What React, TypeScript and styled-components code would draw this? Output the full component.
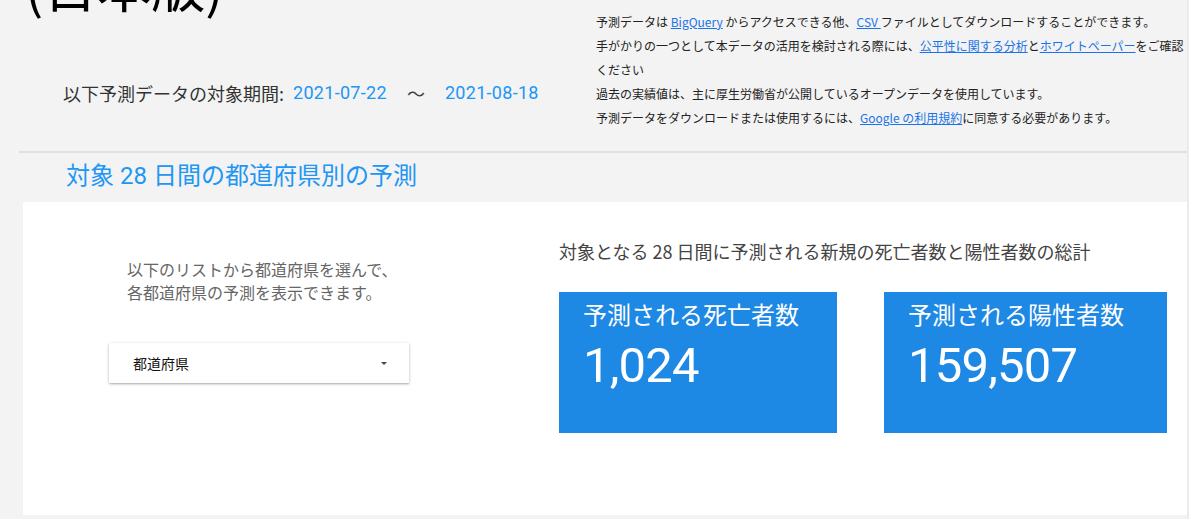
import * as React from "react";
import styled, { createGlobalStyle } from "styled-components";

const GlobalStyle = createGlobalStyle`
  html, body {
    margin: 0;
    padding: 0;
    background: #f3f3f3;
    overflow: hidden;
  }
  body {
    font-family: "Noto Sans CJK JP", "Noto Sans", sans-serif;
    color: #212121;
  }
`;

const Page = styled.div`
  width: 1187px;
  border-right: 2px solid #ebebeb;
  min-height: 519px;
`;

const Header = styled.header`
  display: flex;
  height: 151px;
`;

const HeaderLeft = styled.div`
  width: 596px;
  flex-shrink: 0;
`;

const Title = styled.h1`
  margin: -42px 0 0 0;
  padding-left: 25px;
  font-size: 54px;
  font-weight: 400;
  line-height: 54px;
  color: #000;
  white-space: nowrap;
`;

const Period = styled.div`
  display: flex;
  align-items: center;
  margin: 68px 0 0 63px;
  font-size: 18px;
  line-height: 26px;
  color: #333;
`;

const DateText = styled.span<{ $gap?: number }>`
  margin-left: ${p => p.$gap ?? 0}px;
  font-family: Roboto, "Noto Sans CJK JP", sans-serif;
  font-size: 18px;
  color: #2196f3;
  letter-spacing: 0.3px;
`;

const Tilde = styled.span`
  margin-left: 20px;
  color: #444;
`;

const Info = styled.div`
  width: 591px;
  padding-top: 10px;
  font-size: 12px;
  line-height: 24px;
  color: #222;
`;

const InfoLine = styled.p`
  margin: 0;
`;

const Link = styled.a`
  color: #1a73e8;
  text-decoration: underline;
`;

const Divider = styled.hr`
  margin: 0 0 0 19px;
  border: none;
  height: 2px;
  background: #e0e0e0;
`;

const SectionTitle = styled.h2`
  margin: 0;
  padding: 7px 0 0 66px;
  height: 49px;
  font-family: Roboto, "Noto Sans CJK JP", sans-serif;
  font-size: 24px;
  font-weight: 400;
  line-height: 32px;
  color: #2196f3;
  box-sizing: border-box;
`;

const Panel = styled.section`
  display: grid;
  grid-template-columns: 536px 1fr;
  margin-left: 23px;
  height: 313px;
  background: #fff;
`;

const LeftCol = styled.div`
  padding: 56px 0 0 86px;
`;

const Hint = styled.p`
  margin: 0 0 0 18px;
  font-size: 16px;
  line-height: 23px;
  color: #666;
`;

const Select = styled.div`
  display: flex;
  align-items: center;
  justify-content: space-between;
  width: 300px;
  height: 40px;
  margin-top: 39px;
  padding: 0 22px 0 24px;
  box-sizing: border-box;
  background: #fff;
  box-shadow: 0 1px 3px rgba(0, 0, 0, 0.25), 0 1px 1px rgba(0, 0, 0, 0.1);
  font-size: 14px;
  color: #111;
`;

const Caret = styled.span`
  width: 0;
  height: 0;
  border-left: 3px solid transparent;
  border-right: 3px solid transparent;
  border-top: 3px solid #444;
`;

const RightCol = styled.div`
  padding-top: 37px;
`;

const Summary = styled.p`
  margin: 0;
  font-size: 18px;
  line-height: 25px;
  color: #444;
`;

const Cards = styled.div`
  display: flex;
  gap: 47px;
  margin-top: 28px;
`;

const Card = styled.div<{ $width: number }>`
  width: ${p => p.$width}px;
  height: 141px;
  padding: 6px 0 0 24px;
  box-sizing: border-box;
  background: #1e88e5;
  color: #fff;
`;

const CardLabel = styled.div`
  font-size: 24px;
  line-height: 32px;
`;

const CardValue = styled.div`
  margin-top: 8px;
  font-family: Roboto, sans-serif;
  font-size: 49px;
  line-height: 56px;
  letter-spacing: -0.8px;
`;

const cards = [
  { label: "予測される死亡者数", value: "1,024", width: 278 },
  { label: "予測される陽性者数", value: "159,507", width: 283 },
];

export default function App() {
  return (
    <>
      <GlobalStyle />
      <Page>
        <Header>
          <HeaderLeft>
            <Title>(日本版)</Title>
            <Period>
              以下予測データの対象期間:
              <DateText $gap={9}>2021-07-22</DateText>
              <Tilde>〜</Tilde>
              <DateText $gap={20}>2021-08-18</DateText>
            </Period>
          </HeaderLeft>
          <Info>
            <InfoLine>
              予測データは <Link href="#">BigQuery</Link> からアクセスできる他、
              <Link href="#">CSV </Link>ファイルとしてダウンロードすることができます。
            </InfoLine>
            <InfoLine>
              手がかりの一つとして本データの活用を検討される際には、
              <Link href="#">公平性に関する分析</Link>と<Link href="#">ホワイトペーパー</Link>
              をご確認ください
            </InfoLine>
            <InfoLine>過去の実績値は、主に厚生労働省が公開しているオープンデータを使用しています。</InfoLine>
            <InfoLine>
              予測データをダウンロードまたは使用するには、
              <Link href="#">Google の利用規約</Link>に同意する必要があります。
            </InfoLine>
          </Info>
        </Header>
        <Divider />
        <SectionTitle>対象 28 日間の都道府県別の予測</SectionTitle>
        <Panel>
          <LeftCol>
            <Hint>
              以下のリストから都道府県を選んで、
              <br />
              各都道府県の予測を表示できます。
            </Hint>
            <Select>
              <span>都道府県</span>
              <Caret />
            </Select>
          </LeftCol>
          <RightCol>
            <Summary>対象となる 28 日間に予測される新規の死亡者数と陽性者数の総計</Summary>
            <Cards>
              {cards.map(c => (
                <Card key={c.label} $width={c.width}>
                  <CardLabel>{c.label}</CardLabel>
                  <CardValue>{c.value}</CardValue>
                </Card>
              ))}
            </Cards>
          </RightCol>
        </Panel>
      </Page>
    </>
  );
}
